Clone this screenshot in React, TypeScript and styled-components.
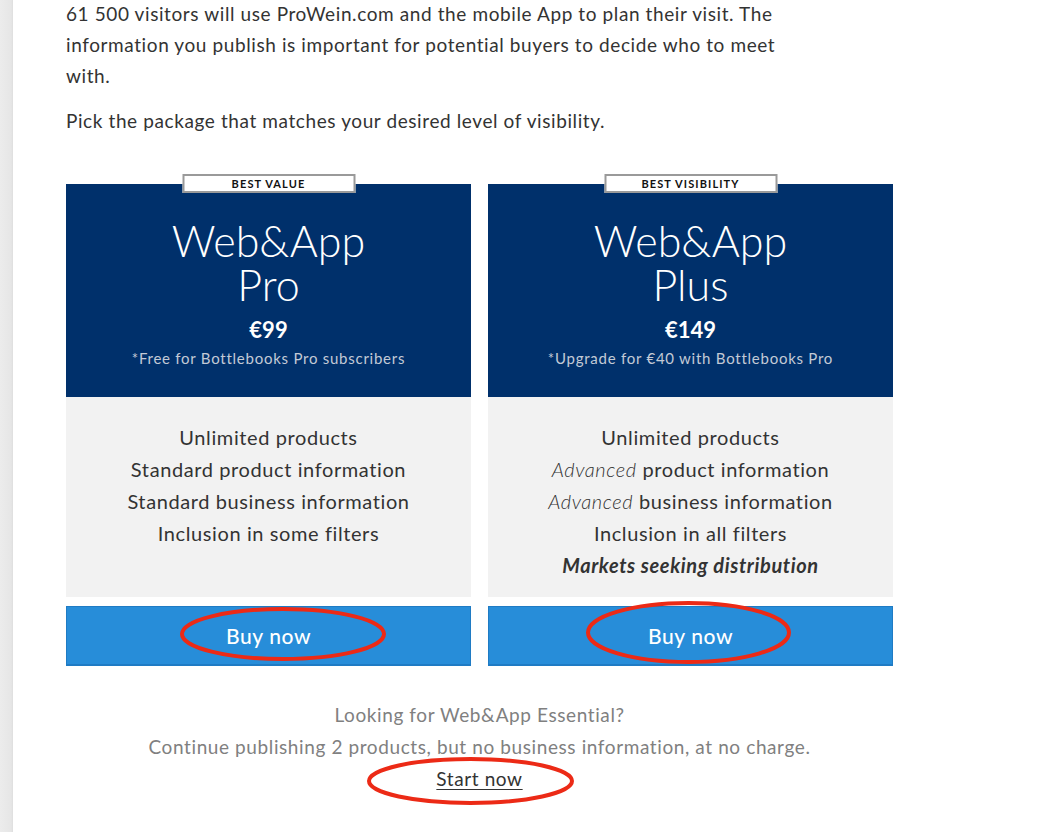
import React from 'react';
import styled, { createGlobalStyle } from 'styled-components';

const Global = createGlobalStyle`
  html, body {
    margin: 0;
    padding: 0;
    background: #fff;
    overflow: hidden;
  }
  body {
    font-family: Lato, "Liberation Sans", sans-serif;
    color: #333;
  }
`;

const Page = styled.div`
  display: flex;
  height: 832px;
`;

const Rail = styled.div`
  width: 13px;
  flex-shrink: 0;
  background: linear-gradient(to right, #ececec, #e6e6e6 85%, #dedede);
`;

const Main = styled.div`
  width: 827px;
  margin-left: 53px;
  margin-top: -2px;
`;

const Intro = styled.p`
  margin: 0 0 14px;
  max-width: 728px;
  font-size: 19px;
  line-height: 31px;
  letter-spacing: 0.6px;
  color: #333;
`;

const Cards = styled.div`
  display: grid;
  grid-template-columns: 405px 405px;
  column-gap: 17px;
  margin-top: 48px;
`;

const Card = styled.div`
  position: relative;
  display: flex;
  flex-direction: column;
`;

const Badge = styled.div`
  position: absolute;
  top: -10px;
  left: 50%;
  transform: translateX(-50%);
  width: 169px;
  height: 15px;
  border: 2px solid #9a9a9a;
  background: #fff;
  color: #111;
  font-family: Lato, sans-serif;
  font-weight: 700;
  font-size: 11px;
  line-height: 15px;
  letter-spacing: 1.1px;
  text-align: center;
  text-transform: uppercase;
`;

const Header = styled.div`
  background: #00306b;
  color: #fff;
  text-align: center;
  padding: 35px 0 28px;
`;

const Title = styled.div`
  font-family: Lato, sans-serif;
  font-weight: 300;
  font-size: 43px;
  line-height: 44px;
`;

const Price = styled.div`
  margin-top: 9px;
  font-size: 22px;
  font-weight: 700;
  line-height: 28px;
`;

const Note = styled.div`
  margin-top: 3px;
  font-size: 15px;
  line-height: 22px;
  letter-spacing: 0.75px;
  color: #c3cad6;
`;

const Features = styled.ul`
  flex: 1;
  list-style: none;
  margin: 0;
  padding: 24px 0 16px;
  background: #f2f2f2;
  text-align: center;
  font-size: 20px;
  line-height: 32px;
  letter-spacing: 0.6px;
  color: #333;
`;

const Feature = styled.li<{ $strong?: boolean }>`
  font-weight: ${(p) => (p.$strong ? 700 : 400)};
  font-style: ${(p) => (p.$strong ? 'italic' : 'normal')};
  em {
    font-weight: 300;
  }
`;

const BuyButton = styled.button`
  position: relative;
  margin-top: 9px;
  height: 60px;
  border: 1px solid #1f7bc4;
  border-bottom-width: 2px;
  background: #278dd9;
  color: #fff;
  font-family: Lato, sans-serif;
  font-size: 21px;
  font-weight: 500;
  letter-spacing: 0.6px;
  cursor: pointer;
`;

const Ring = styled.svg`
  position: absolute;
  pointer-events: none;
  overflow: visible;
`;

const Footer = styled.div`
  margin-top: 33px;
  text-align: center;
  font-size: 19px;
  line-height: 32px;
  letter-spacing: 0.6px;
  color: #808080;
`;

const StartLink = styled.a`
  position: relative;
  display: inline-block;
  color: #333;
  text-decoration: underline;
  text-underline-offset: 3px;
`;

type Plan = {
  badge: string;
  name: string;
  price: string;
  note: string;
  features: React.ReactNode[];
  strong?: string;
  ring: { left: number; top: number; w: number; h: number };
};

const plans: Plan[] = [
  {
    badge: 'Best value',
    name: 'Pro',
    price: '€99',
    note: '*Free for Bottlebooks Pro subscribers',
    features: [
      'Unlimited products',
      'Standard product information',
      'Standard business information',
      'Inclusion in some filters',
    ],
    ring: { left: 113, top: 0, w: 206, h: 54 },
  },
  {
    badge: 'Best visibility',
    name: 'Plus',
    price: '€149',
    note: '*Upgrade for €40 with Bottlebooks Pro',
    features: [
      'Unlimited products',
      <>
        <em>Advanced</em> product information
      </>,
      <>
        <em>Advanced</em> business information
      </>,
      'Inclusion in all filters',
    ],
    strong: 'Markets seeking distribution',
    ring: { left: 97, top: -6, w: 205, h: 63 },
  },
];

function Ellipse({ left, top, w, h }: { left: number; top: number; w: number; h: number }) {
  return (
    <Ring style={{ left, top }} width={w} height={h} viewBox={`0 0 ${w} ${h}`}>
      <ellipse
        cx={w / 2}
        cy={h / 2}
        rx={w / 2 - 2}
        ry={h / 2 - 2}
        fill="none"
        stroke="#ec2a16"
        strokeWidth={4}
      />
    </Ring>
  );
}

export default function App() {
  return (
    <>
      <Global />
      <Page>
        <Rail />
        <Main>
          <Intro>
            61 500 visitors will use ProWein.com and the mobile App to plan their visit. The
            information you publish is important for potential buyers to decide who to meet
            with.
          </Intro>
          <Intro>Pick the package that matches your desired level of visibility.</Intro>

          <Cards>
            {plans.map((plan) => (
              <Card key={plan.name}>
                <Badge>{plan.badge}</Badge>
                <Header>
                  <Title>
                    Web&amp;App
                    <br />
                    {plan.name}
                  </Title>
                  <Price>{plan.price}</Price>
                  <Note>{plan.note}</Note>
                </Header>
                <Features>
                  {plan.features.map((f, i) => (
                    <Feature key={i}>{f}</Feature>
                  ))}
                  {plan.strong && <Feature $strong>{plan.strong}</Feature>}
                </Features>
                <BuyButton>
                  Buy now
                  <Ellipse {...plan.ring} />
                </BuyButton>
              </Card>
            ))}
          </Cards>

          <Footer>
            Looking for Web&amp;App Essential?
            <br />
            Continue publishing 2 products, but no business information, at no charge.
            <br />
            <StartLink href="#">
              Start now
              <Ellipse left={-69} top={-6} w={207} h={48} />
            </StartLink>
          </Footer>
        </Main>
      </Page>
    </>
  );
}
